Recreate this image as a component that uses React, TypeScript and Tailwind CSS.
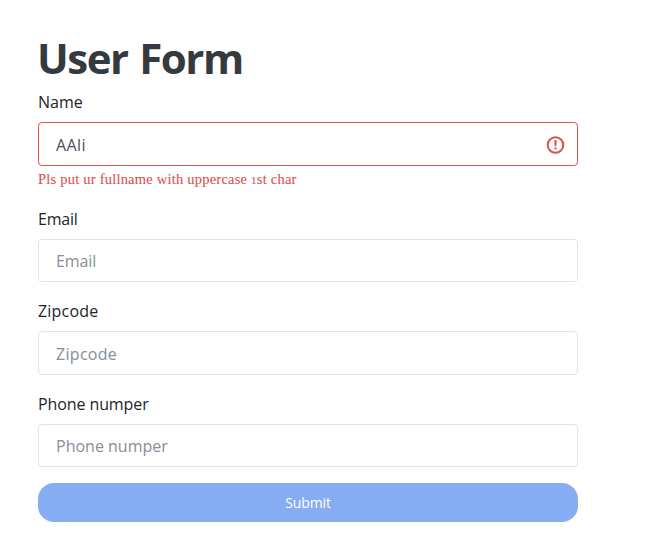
import React from "react";

type FieldProps = {
  id: string;
  label: string;
  labelClass: string;
  boxClass: string;
  inputClass: string;
  value?: string;
  error?: React.ReactNode;
};

function Field({ id, label, labelClass, boxClass, inputClass, value, error }: FieldProps) {
  return (
    <div>
      <label htmlFor={id} className={`mb-2 block h-6 w-fit text-[16px] leading-6 text-[#212529] ${labelClass}`}>
        {label}
      </label>
      <div className={`flex items-center rounded-[4px] border bg-white pl-[17px] pr-[12px] ${boxClass}`}>
        <input
          id={id}
          defaultValue={value}
          placeholder={label}
          className={`h-full min-w-0 flex-1 bg-transparent text-[16px] text-[#495057] outline-none placeholder:text-[#868e96] placeholder:opacity-100 ${inputClass}`}
        />
        {error && (
          <svg className="mt-px" width="20" height="20" viewBox="0 0 20 20" fill="none" stroke="#d9534f">
            <circle cx="10.5" cy="10" r="7.8" strokeWidth="2" />
            <path d="M9.2 5.2h2.6l-.5 6h-1.6z" fill="#d9534f" stroke="none" />
            <circle cx="10.5" cy="13.4" r="1.1" fill="#d9534f" stroke="none" />
          </svg>
        )}
      </div>
      {error}
    </div>
  );
}

export default function App() {
  return (
    <main className="min-h-[560px] bg-white pl-[38px] pt-[32px] font-['Open_Sans',sans-serif] font-[370]">
      <form className="w-[540px]" onSubmit={(e) => e.preventDefault()}>
        <h1 className="-ml-px h-[58px] w-fit whitespace-nowrap text-[42px] font-[660] leading-[51px] tracking-[-1.45px] text-[#343a40] [word-spacing:2px]">
          User Form
        </h1>
        <Field
          id="name"
          label="Name"
          labelClass=""
          boxClass="h-[44px] border-[#d9534f]"
          inputClass="pt-[2px] tracking-[0.4px]"
          value="AAli"
          error={
            <p className="h-[27px] w-fit pt-[3px] font-['Liberation_Serif',serif] text-[14.5px] leading-[20px] tracking-[0.22px] text-[#d9534f] [-webkit-text-stroke:0.1px_#d9534f]">
              Pls put ur fullname with uppercase <span className="text-[11px]">1</span>st char
            </p>
          }
        />
        <div className="mt-[14px]">
          <Field id="email" label="Email" labelClass="tracking-[-0.2px]" boxClass="h-[43px] border-[#e3e3e3]" inputClass="tracking-[-0.1px]" />
        </div>
        <div className="mt-[17px]">
          <Field id="zip" label="Zipcode" labelClass="tracking-[0.2px]" boxClass="h-[44px] border-[#e3e3e3]" inputClass="pt-[2px] tracking-[0.3px]" />
        </div>
        <div className="mt-[17px]">
          <Field id="phone" label="Phone numper" labelClass="tracking-[-0.1px]" boxClass="h-[43px] border-[#e3e3e3]" inputClass="" />
        </div>
        <button className="mt-[16px] flex h-[39px] w-full items-center justify-center rounded-[16px] bg-[#86acf1] text-[14px] tracking-[-0.1px] text-white">
          Submit
        </button>
      </form>
    </main>
  );
}
